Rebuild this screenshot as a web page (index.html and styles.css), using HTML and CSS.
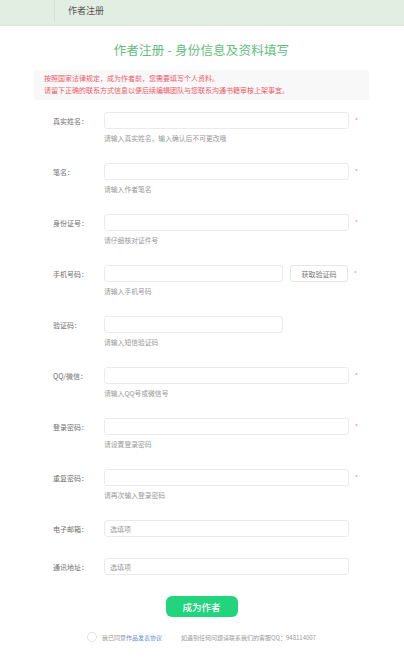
FILE: index.html
```html
<!DOCTYPE html>
<html lang="zh-CN">
<head>
<meta charset="utf-8">
<title>作者注册</title>
<link rel="stylesheet" href="styles.css">
</head>
<body>
<header class="topbar">
  <div class="topbar-inner">
    <span class="topbar-title">作者注册</span>
  </div>
</header>
<main class="page">
  <h1 class="title">作者注册 - 身份信息及资料填写</h1>
  <div class="notice">
    <p>按照国家法律规定，成为作者前，您需要填写个人资料。</p>
    <p>请留下正确的联系方式信息以便后续编辑团队与您联系沟通书籍审核上架事宜。</p>
  </div>
  <form class="form">
    <div class="row">
      <label class="label">真实姓名：</label>
      <div class="field">
        <div class="line"><input class="input" type="text"><span class="req">*</span></div>
        <div class="hint">请输入真实姓名，输入确认后不可更改哦</div>
      </div>
    </div>
    <div class="row">
      <label class="label">笔名：</label>
      <div class="field">
        <div class="line"><input class="input" type="text"><span class="req">*</span></div>
        <div class="hint">请输入作者笔名</div>
      </div>
    </div>
    <div class="row">
      <label class="label">身份证号：</label>
      <div class="field">
        <div class="line"><input class="input" type="text"><span class="req">*</span></div>
        <div class="hint">请仔细核对证件号</div>
      </div>
    </div>
    <div class="row">
      <label class="label">手机号码：</label>
      <div class="field">
        <div class="line"><input class="input input-short" type="text"><button class="code-btn" type="button">获取验证码</button><span class="req">*</span></div>
        <div class="hint">请输入手机号码</div>
      </div>
    </div>
    <div class="row">
      <label class="label">验证码：</label>
      <div class="field">
        <div class="line"><input class="input input-short" type="text"></div>
        <div class="hint">请输入短信验证码</div>
      </div>
    </div>
    <div class="row">
      <label class="label">QQ/微信：</label>
      <div class="field">
        <div class="line"><input class="input" type="text"><span class="req">*</span></div>
        <div class="hint">请输入QQ号或微信号</div>
      </div>
    </div>
    <div class="row">
      <label class="label">登录密码：</label>
      <div class="field">
        <div class="line"><input class="input" type="password"><span class="req">*</span></div>
        <div class="hint">请设置登录密码</div>
      </div>
    </div>
    <div class="row">
      <label class="label">重复密码：</label>
      <div class="field">
        <div class="line"><input class="input" type="password"><span class="req">*</span></div>
        <div class="hint">请再次输入登录密码</div>
      </div>
    </div>
    <div class="row row-plain">
      <label class="label">电子邮箱：</label>
      <div class="field">
        <div class="line"><input class="input" type="text" placeholder="选填项"></div>
      </div>
    </div>
    <div class="row row-plain">
      <label class="label">通讯地址：</label>
      <div class="field">
        <div class="line"><input class="input" type="text" placeholder="选填项"></div>
      </div>
    </div>
    <div class="submit-wrap">
      <button class="submit" type="button">成为作者</button>
    </div>
    <div class="footer">
      <span class="agree"><span class="check"></span>我已同意<a class="link">作品发表协议</a></span>
      <span class="contact">如遇到任何问题请联系我们的客服QQ：948114007</span>
    </div>
  </form>
</main>
</body>
</html>
```

FILE: styles.css
```css
* { box-sizing: border-box; }
html, body { margin: 0; padding: 0; background: #fff; }
body {
  font-family: "Noto Sans CJK SC", "Noto Sans", sans-serif;
  color: #555;
}
p { margin: 0; }

.topbar {
  height: 26px;
  background: #e3eee2;
  border-bottom: 1px solid #dde8dc;
}
.topbar-inner {
  margin-left: 54px;
  height: 21px;
  border-left: 1px solid #d6e1d5;
  padding-left: 13px;
  display: flex;
  align-items: center;
}
.topbar-title {
  font-size: 9px;
  color: #555;
  line-height: 1;
}

.page {
  width: 335px;
  margin-left: 34px;
}

.title {
  margin: 16px 0 13px;
  text-align: center;
  font-size: 12.5px;
  line-height: 15px;
  font-weight: normal;
  color: #62be7c;
  letter-spacing: 0.2px;
}

.notice {
  background: #f8f8f8;
  border-radius: 3px;
  padding: 3px 10px 4px;
  font-size: 7px;
  line-height: 11.5px;
  color: #ec5b6b;
}

.form {
  margin-top: 12px;
  padding-left: 19px;
}

.row {
  display: flex;
  align-items: flex-start;
  margin-bottom: 20px;
}
.row-plain { margin-bottom: 21px; }

.label {
  width: 51px;
  flex: none;
  height: 17px;
  display: flex;
  align-items: center;
  font-size: 7px;
  color: #707070;
}

.field { display: flex; flex-direction: column; }

.line {
  display: flex;
  align-items: center;
  height: 17px;
}

.input {
  width: 245px;
  height: 17px;
  border: 1px solid #ebebeb;
  border-radius: 3px;
  padding: 0 5px;
  font-family: inherit;
  font-size: 7px;
  color: #555;
  background: #fff;
  outline: none;
}
.input::placeholder { color: #999; }
.input-short { width: 179px; }

.code-btn {
  width: 58px;
  height: 17px;
  margin-left: 7px;
  border: 1px solid #e6e6e6;
  border-radius: 3px;
  background: #fff;
  font-family: inherit;
  font-size: 7px;
  color: #777;
  padding: 0;
}

.req {
  margin-left: 6px;
  font-size: 6px;
  color: #e88a94;
  line-height: 1;
}

.hint {
  margin-top: 4px;
  height: 10px;
  line-height: 10px;
  font-size: 6.8px;
  color: #999;
}

.submit-wrap {
  display: flex;
  justify-content: center;
  margin-left: -19px;
  margin-top: 1px;
}
.submit {
  width: 72px;
  height: 21px;
  border: none;
  border-radius: 6px;
  background: #22d47b;
  color: #fff;
  font-family: inherit;
  font-size: 9.5px;
  font-weight: 500;
  padding: 0;
}

.footer {
  margin-top: 15px;
  margin-left: -19px;
  display: flex;
  justify-content: center;
  align-items: center;
  gap: 19px;
  font-size: 6px;
  color: #999;
  padding-left: 0;
}
.agree { display: flex; align-items: center; }
.check {
  width: 10px;
  height: 10px;
  border: 1px solid #e3e3e3;
  border-radius: 50%;
  margin-right: 5px;
  display: inline-block;
}
.link { color: #6b8fcc; }
```
